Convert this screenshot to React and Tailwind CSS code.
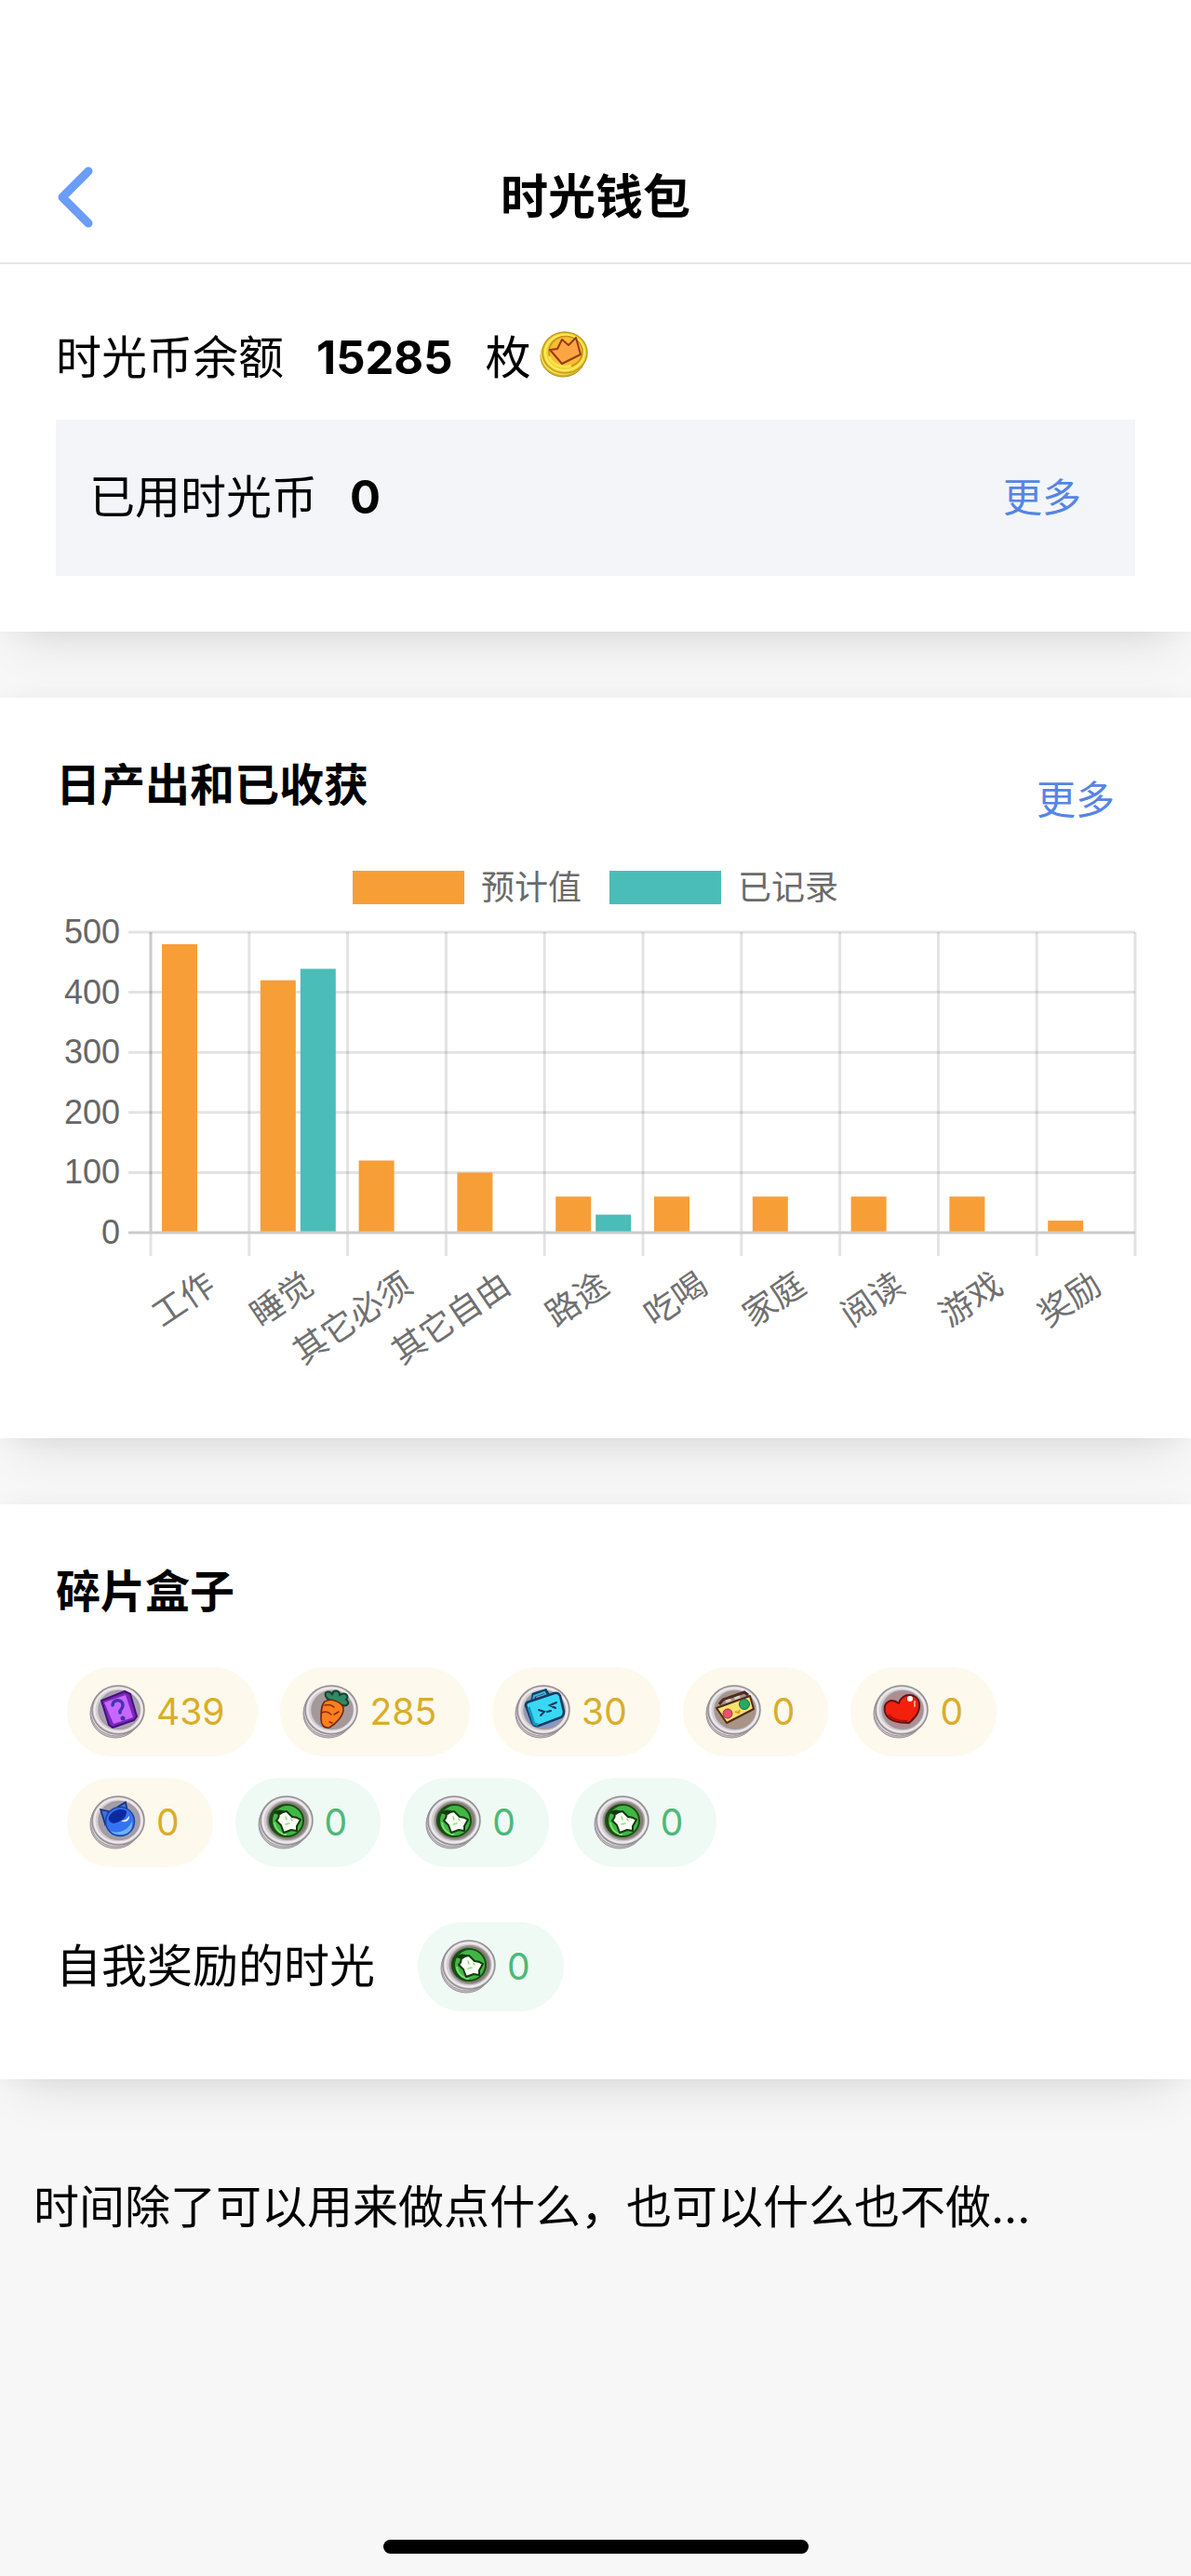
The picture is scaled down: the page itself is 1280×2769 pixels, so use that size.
import React from "react";

const CATEGORIES = [
  { name: "工作", expected: 480, recorded: 0 },
  { name: "睡觉", expected: 420, recorded: 439 },
  { name: "其它必须", expected: 120, recorded: 0 },
  { name: "其它自由", expected: 100, recorded: 0 },
  { name: "路途", expected: 60, recorded: 30 },
  { name: "吃喝", expected: 60, recorded: 0 },
  { name: "家庭", expected: 60, recorded: 0 },
  { name: "阅读", expected: 60, recorded: 0 },
  { name: "游戏", expected: 60, recorded: 0 },
  { name: "奖励", expected: 20, recorded: 0 },
];

const FRAGMENTS = [
  { icon: "question", count: 439, tone: "gold" },
  { icon: "carrot", count: 285, tone: "gold" },
  { icon: "briefcase", count: 30, tone: "gold" },
  { icon: "radio", count: 0, tone: "gold" },
  { icon: "heart", count: 0, tone: "gold" },
  { icon: "cat", count: 0, tone: "gold" },
  { icon: "star", count: 0, tone: "green" },
  { icon: "star", count: 0, tone: "green" },
  { icon: "star", count: 0, tone: "green" },
];

function GoldCoin() {
  return (
    <svg viewBox="0 0 54 52" className="h-[52px] w-[54px]" aria-hidden="true">
      <ellipse cx="26" cy="28" rx="24" ry="22" fill="#d9b522" stroke="#b08a18" strokeWidth="1" />
      <ellipse cx="26" cy="26" rx="24" ry="22" fill="#f0dc55" />
      <ellipse cx="28" cy="24" rx="24" ry="22" fill="#f0cf28" stroke="#c49c1c" strokeWidth="1.5" />
      <ellipse cx="28" cy="24" rx="21" ry="19" fill="none" stroke="#f8ec6a" strokeWidth="2" />
      <ellipse cx="29" cy="23" rx="18" ry="16.5" fill="#f6bd35" stroke="#c8901a" strokeWidth="1.5" />
      <path d="M11 28a18 16 0 0 0 24 10" fill="none" stroke="#fbe04e" strokeWidth="3" />
      <path d="m12 21 8-1 5-10 7 6 8-8 5 18-20 10z" fill="#fba545" stroke="#9a3a10" strokeWidth="2" strokeLinejoin="round" />
    </svg>
  );
}

const GLYPHS = {
  question: (
    <>
      <path d="m13 17 25-10 6 3 7 24-3 4-23 8-4-3z" fill="#7a28b8" stroke="#45107c" strokeWidth="2" strokeLinejoin="round" />
      <path d="m16 19 23-8 8 24-21 7z" fill="#c866ff" />
      <path d="M25 22c0-7 11-7 11 0 0 5-4 4-3 8" fill="none" stroke="#4434b0" strokeWidth="3.5" strokeLinecap="round" />
      <circle cx="36" cy="36" r="2.5" fill="#4434b0" />
    </>
  ),
  carrot: (
    <>
      <path d="M26 14c-5-8 5-8 6-3 1-7 8-5 8 0 6-4 11 1 7 5 5 3 1 8-4 6l-12-4z" fill="#2f8a64" stroke="#17402f" strokeWidth="2" />
      <path d="M24 18c6-4 18 0 20 7 1 8-8 17-15 21-6 1-9-3-9-9 0-7 0-15 4-19z" fill="#fb7f1f" stroke="#71240b" strokeWidth="1.5" />
      <path d="M24 22c5-1 8 0 10 2M21 30c4-2 8 0 10 2M39 29l-5 3M29 40l3 1" fill="none" stroke="#8c2b0a" strokeWidth="1.5" strokeLinecap="round" />
    </>
  ),
  briefcase: (
    <>
      <path d="m20 17 1-6 12-4 3 5" fill="none" stroke="#0f3f66" strokeWidth="5" />
      <path d="m20 17 1-5 11-4 3 5" fill="none" stroke="#38b9dc" strokeWidth="2" />
      <path d="M12 22q0-3 4-4l27-9q4-1 6 3l4 17q0 4-3 6l-24 9q-5 1-7-3z" fill="#38d8f3" stroke="#123a63" strokeWidth="2.5" />
      <path d="m15 24 6 18 4 1" fill="none" stroke="#1795bd" strokeWidth="3" />
      <path d="m26 27 6 2-4 4M45 19l-7 3 6 3M35 29l4-1" fill="none" stroke="#13345c" strokeWidth="2" strokeLinecap="round" />
    </>
  ),
  radio: (
    <>
      <path d="m15 21 4-5 23-8 4 3" fill="none" stroke="#4c2b2b" strokeWidth="3" />
      <path d="m22 18 18-6" stroke="#d7ccc4" strokeWidth="3" strokeDasharray="6 4" />
      <path d="m12 25 36-13 4 14-29 15z" fill="#f7e36d" stroke="#4e2a17" strokeWidth="2" strokeLinejoin="round" />
      <circle cx="24" cy="31" r="5" fill="#ef4f70" stroke="#9c3545" />
      <circle cx="42" cy="21" r="5.5" fill="#28a968" stroke="#1d6e45" />
      <path d="m32 29 4 1 1-3" fill="none" stroke="#e19a26" strokeWidth="2" />
    </>
  ),
  heart: (
    <>
      <path d="M13 29c-2-11 7-15 15-9 3-12 20-12 22 0 1 9-4 15-11 21-10 0-23-1-26-12z" fill="#f3200e" stroke="#611414" strokeWidth="2" strokeLinejoin="round" />
      <circle cx="40" cy="15" r="3" fill="#fff" />
      <path d="M45 18v5" stroke="#ff9a86" strokeWidth="2" strokeLinecap="round" />
      <path d="M17 32c4 6 12 7 20 7" fill="none" stroke="#b30f0b" strokeWidth="2" />
    </>
  ),
  cat: (
    <>
      <path d="M17 31 12 15l9 2zM31 12l8-5 2 10z" fill="#3f6fe0" stroke="#142f73" strokeWidth="1.5" />
      <circle cx="33" cy="28" r="15.5" fill="#3474f2" stroke="#2044a0" strokeWidth="1.5" />
      <path d="M21 23c4-8 14-10 19-6 0 7-5 11-14 13-4-1-6-4-5-7z" fill="#0c2aa0" />
      <path d="M23 38c8 4 18 0 23-10 1 9-4 14-12 14-5 0-9-1-11-4z" fill="#6fb4ff" />
      <path d="M34 27c4 0 7-2 9-5 0 5-4 8-9 5z" fill="#fff" />
    </>
  ),
  star: (
    <>
      <ellipse cx="31" cy="27" rx="19" ry="18" fill="#1c4a16" />
      <circle cx="32" cy="27" r="16" fill="#3fb843" />
      <path d="M18 29a14 14 0 0 0 13 13" fill="none" stroke="#7ae06c" strokeWidth="2" />
      <path d="m22 19 9-2 6 6q5 0 9 3l-4 7 0 5-6-1-8 3-3-8-5-5q4-4 2-8z" fill="#fbfff6" stroke="#16390f" strokeWidth="2" strokeLinejoin="round" />
      <path d="M17 19q5-6 13-2l-6 4z" fill="#16390f" />
      <path d="m30 23 1 3M36 25l1 2M30 31l4-1" stroke="#8be07f" strokeWidth="1.5" strokeLinecap="round" />
    </>
  ),
};

const WELLS = {
  question: "#a9a0b5",
  carrot: "#a5989a",
  briefcase: "#8699c4",
  radio: "#a89384",
  heart: "#b08c91",
  cat: "#a39dac",
  star: "#7f8070",
};

function TokenIcon({ name }) {
  return (
    <svg viewBox="0 0 60 58" className="h-[58px] w-[60px] shrink-0" aria-hidden="true">
      <ellipse cx="28" cy="31" rx="27" ry="26" fill="#c4bfc2" stroke="#989398" strokeWidth="1" />
      <ellipse cx="29" cy="29" rx="27.5" ry="26" fill="#dedade" stroke="#9c979c" strokeWidth="1" />
      <ellipse cx="31" cy="27" rx="28" ry="26" fill="#d3ced1" stroke="#938e93" strokeWidth="1.5" />
      <ellipse cx="31" cy="27" rx="25.5" ry="23.5" fill="none" stroke="#efebed" strokeWidth="2" />
      <ellipse cx="32" cy="27" rx="22" ry="20.5" fill={WELLS[name]} stroke="#a09a9e" strokeWidth="1.5" />
      {GLYPHS[name]}
    </svg>
  );
}

const TONES = {
  gold: "bg-[#fdf9ec] text-[#d9ad2c]",
  green: "bg-[#effaf4] text-[#4db878]",
};

function Chip({ icon, count, tone }) {
  return (
    <span className={`flex h-24 items-center gap-3 rounded-full pr-9 pl-6 text-[39px] ${TONES[tone]}`}>
      <TokenIcon name={icon} />
      {count}
    </span>
  );
}

function Card({ children, className }) {
  return (
    <section className={`bg-white px-[60px] shadow-[0_30px_50px_-20px_rgba(0,0,0,0.1),0_0_30px_-8px_rgba(0,0,0,0.09)] ${className}`}>
      {children}
    </section>
  );
}

const LEFT = 102;
const RIGHT = 1160;
const TOP = 20;
const BASE = 343;
const COLUMN = (RIGHT - LEFT) / CATEGORIES.length;
const yOf = (value) => BASE - (value / 500) * (BASE - TOP);

function BarChart() {
  return (
    <svg viewBox="0 0 1160 500" className="block w-full overflow-visible" role="img" aria-label="日产出和已收获">
      <g stroke="#000" strokeOpacity="0.11" strokeWidth="3">
        {[100, 200, 300, 400, 500].map((v) => (
          <line key={v} x1="78" x2={RIGHT} y1={yOf(v)} y2={yOf(v)} />
        ))}
        {[...CATEGORIES, null].map((_, i) => (
          <line key={i} x1={LEFT + i * COLUMN} x2={LEFT + i * COLUMN} y1={TOP} y2="368" />
        ))}
        <line x1={LEFT} x2={LEFT} y1={TOP} y2={BASE} />
      </g>
      <g fill="#666" fontSize="36" textAnchor="end" className="font-['Liberation_Sans','Noto_Sans_CJK_SC',sans-serif]">
        {[0, 100, 200, 300, 400, 500].map((v) => (
          <text key={v} x="69" y={yOf(v) + 12}>{v}</text>
        ))}
      </g>
      {CATEGORIES.map((c, i) => {
        const x = LEFT + i * COLUMN;
        return (
          <g key={c.name}>
            <rect x={x + 12} y={yOf(c.expected)} width="38" height={BASE - yOf(c.expected)} fill="#f79e37" />
            <rect x={x + 55} y={yOf(c.recorded)} width="38" height={BASE - yOf(c.recorded)} fill="#4abdb9" />
            <text
              transform={`translate(${x + COLUMN / 2 + 19} 405) rotate(-34)`}
              textAnchor="end"
              fontSize="36"
              fill="#707070"
              className="font-['Noto_Sans_CJK_SC',sans-serif]"
            >
              {c.name}
            </text>
          </g>
        );
      })}
      <line x1="78" x2={RIGHT} y1={BASE} y2={BASE} stroke="#cbcbcb" strokeWidth="3" />
    </svg>
  );
}

export default function App() {
  return (
    <div className="flex min-h-screen flex-col bg-[#f7f7f7] font-[Inter,'Noto_Sans_CJK_SC',sans-serif] text-[49px] leading-[72px] text-black">
      <header className="relative z-10 grid grid-cols-[1fr_auto_1fr] items-center border-b-2 border-[#e6e6e6] bg-white px-[60px] pt-[142px]">
        <button type="button" aria-label="返回" className="justify-self-start py-[35px]">
          <svg viewBox="0 0 40 70" className="h-[70px] w-10" fill="none" stroke="#6a9df8" strokeWidth="9" strokeLinecap="round" strokeLinejoin="round" aria-hidden="true">
            <path d="M35 7 7 35l28 28" />
          </svg>
        </button>
        <h1 className="text-[51px] font-bold">时光钱包</h1>
      </header>

      <main>
        <Card className="pt-[65px] pb-[60px]">
          <p className="flex items-center">
            时光币余额
            <strong className="mx-[35px] font-bold">15285</strong>
            枚
            <span className="ml-2 pb-2"><GoldCoin /></span>
          </p>
          <div className="mt-[30px] flex items-center justify-between bg-[#f3f5f9] py-12 pr-[58px] pl-9">
            <p>
              已用时光币<strong className="ml-[35px] font-bold">0</strong>
            </p>
            <a href="#used" className="text-[42px] text-[#5585e5]">更多</a>
          </div>
        </Card>

        <Card className="mt-[71px] pt-[58px] pb-16">
          <div className="flex items-start justify-between pr-[22px]">
            <h2 className="text-[48px] font-bold">日产出和已收获</h2>
            <a href="#daily" className="pt-4 text-[42px] text-[#5585e5]">更多</a>
          </div>
          <div className="mt-[30px] flex items-center justify-center gap-[30px] text-[36px] leading-[56px] text-[#6b6b6b]">
            <span className="flex items-center gap-[18px]"><i className="h-9 w-[120px] bg-[#f79e37]" />预计值</span>
            <span className="flex items-center gap-[18px]"><i className="h-9 w-[120px] bg-[#4abdb9]" />已记录</span>
          </div>
          <BarChart />
        </Card>

        <Card className="mt-[71px] pt-[58px] pb-[73px]">
          <h2 className="text-[48px] font-bold">碎片盒子</h2>
          <div className="mt-[45px] flex flex-wrap gap-x-6 gap-y-[23px] px-3">
            {FRAGMENTS.map((f, i) => (
              <Chip key={i} {...f} />
            ))}
          </div>
          <div className="mt-[59px] flex items-center gap-[46px]">
            <p>自我奖励的时光</p>
            <Chip icon="star" count={0} tone="green" />
          </div>
        </Card>

        <p className="px-9 pt-[102px]">时间除了可以用来做点什么，也可以什么也不做...</p>
      </main>

      <div className="mx-auto mt-auto mb-6 h-[15px] w-[457px] rounded-full bg-black" />
    </div>
  );
}
